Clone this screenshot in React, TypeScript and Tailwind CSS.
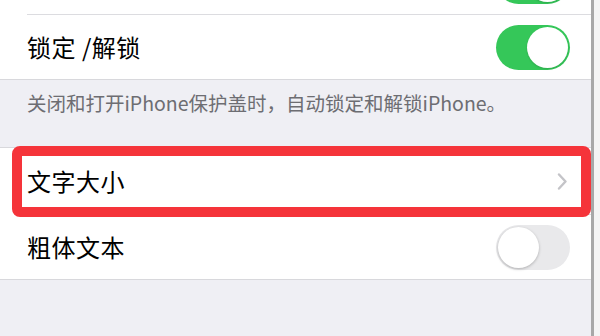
import React from 'react';

const font = { fontFamily: '"Noto Sans CJK SC", "Noto Sans", sans-serif' };

function Toggle({ on }: { on: boolean }) {
  return on ? (
    <div className="w-[74px] h-[45px] rounded-full bg-[#35c759] p-[2px] flex justify-end">
      <div className="w-[41px] h-[41px] rounded-full bg-white shadow-[0_1px_2px_rgba(0,0,0,0.15)]" />
    </div>
  ) : (
    <div className="w-[74px] h-[45px] rounded-full bg-[#e9e9eb] p-[2px] flex justify-start">
      <div className="w-[41px] h-[41px] rounded-full bg-white shadow-[0_1px_3px_rgba(0,0,0,0.25)]" />
    </div>
  );
}

function Chevron() {
  return (
    <svg width="10" height="17" viewBox="0 0 10 17" className="mr-[24px]">
      <polyline points="2,1.5 8.5,8.5 2,15.5" fill="none" stroke="#c4c4c8" strokeWidth="2.4" strokeLinecap="round" strokeLinejoin="round" />
    </svg>
  );
}

export default function App() {
  return (
    <div className="w-[600px] h-[336px] flex overflow-hidden bg-[#f7f7f7]" style={font}>
      <div className="relative w-[591px] h-full bg-[#efeff4] overflow-hidden">
        <div className="bg-white -mt-[51px]">
          <div className="h-[65px] flex items-center justify-end pr-[21px]">
            <Toggle on />
          </div>
          <div className="ml-[27px] h-px bg-[#dcdce0]" />
          <div className="h-[64px] flex items-center justify-between pl-[27px] pr-[21px]">
            <span className="text-[24px] text-black tracking-[0.5px]">锁定 /解锁</span>
            <Toggle on />
          </div>
        </div>
        <div className="h-px bg-[#d8d8dc]" />
        <div className="h-[67px] pl-[27px] pt-[10px]">
          <p className="text-[19.5px] text-[#6d6d72] leading-[26px]">
            关闭和打开iPhone保护盖时，自动锁定和解锁iPhone。
          </p>
        </div>
        <div className="h-px bg-[#d8d8dc]" />
        <div className="bg-white">
          <div className="h-[66px] flex items-center justify-between pl-[27px]">
            <span className="text-[24px] text-black tracking-[0.5px]">文字大小</span>
            <Chevron />
          </div>
          <div className="ml-[27px] h-px bg-[#dcdce0]" />
          <div className="h-[64px] flex items-center justify-between pl-[27px] pr-[21px]">
            <span className="text-[24px] text-black tracking-[0.5px]">粗体文本</span>
            <Toggle on={false} />
          </div>
        </div>
        <div className="h-px bg-[#d8d8dc]" />

        <div className="absolute left-[12px] top-[146px] w-[579px] h-[71px] border-[10px] border-[#f5343a] rounded-[8px]" />
      </div>
      <div className="w-[3px] h-full bg-[#a8a8a8]" />
      <div className="flex-1 h-full bg-[#f4f4f4]" />
    </div>
  );
}
